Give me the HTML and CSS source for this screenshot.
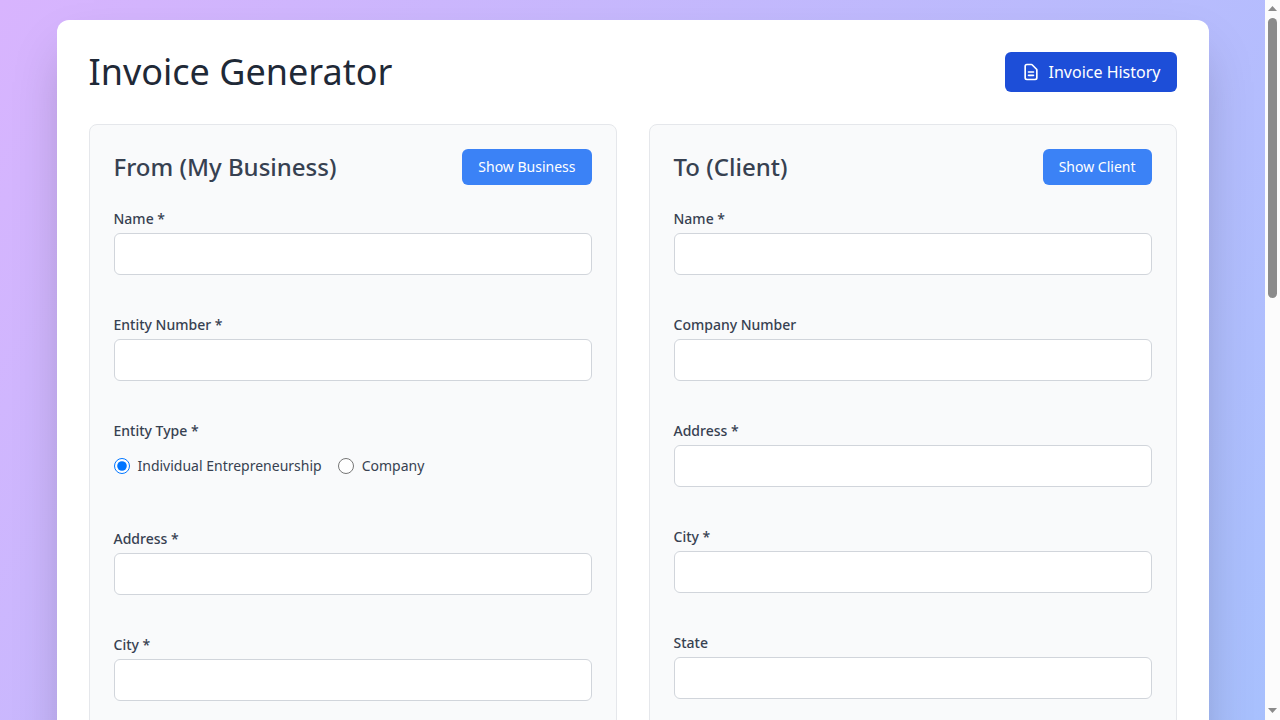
FILE: index.html
```html
<!DOCTYPE html>
<html lang="en">
<head>
<meta charset="utf-8">
<title>Invoice Generator</title>
<link rel="stylesheet" href="styles.css">
</head>
<body>
<div class="viewport">
  <div class="scroller">
    <div class="page">
      <main class="card">
        <header class="card-header">
          <h1>Invoice Generator</h1>
          <button class="history-btn" type="button">
            <svg viewBox="0 0 24 24" fill="none" stroke="currentColor" stroke-width="2" stroke-linecap="round" stroke-linejoin="round"><path d="M9 12h6m-6 4h6m2 5H7a2 2 0 01-2-2V5a2 2 0 012-2h5.586a1 1 0 01.707.293l5.414 5.414a1 1 0 01.293.707V19a2 2 0 01-2 2z"/></svg>
            <span>Invoice History</span>
          </button>
        </header>
        <div class="panels">
          <section class="panel">
            <div class="panel-header"><h2>From (My Business)</h2><button class="show-btn" type="button">Show Business</button></div>
            <div class="fields">
              <div class="field"><label for="b-name">Name *</label><input id="b-name" type="text"></div>
              <div class="field"><label for="b-number">Entity Number *</label><input id="b-number" type="text"></div>
              <div class="field field-type">
                <span class="label">Entity Type *</span>
                <div class="radios">
                  <label class="radio"><input type="radio" name="type" checked><span>Individual Entrepreneurship</span></label>
                  <label class="radio"><input type="radio" name="type"><span>Company</span></label>
                </div>
              </div>
              <div class="field"><label for="b-address">Address *</label><input id="b-address" type="text"></div>
              <div class="field"><label for="b-city">City *</label><input id="b-city" type="text"></div>
            </div>
          </section>
          <section class="panel">
            <div class="panel-header"><h2>To (Client)</h2><button class="show-btn" type="button">Show Client</button></div>
            <div class="fields">
              <div class="field"><label for="c-name">Name *</label><input id="c-name" type="text"></div>
              <div class="field"><label for="c-number">Company Number</label><input id="c-number" type="text"></div>
              <div class="field"><label for="c-address">Address *</label><input id="c-address" type="text"></div>
              <div class="field"><label for="c-city">City *</label><input id="c-city" type="text"></div>
              <div class="field"><label for="c-state">State</label><input id="c-state" type="text"></div>
            </div>
          </section>
        </div>
      </main>
    </div>
  </div>
  <div class="scrollbar">
    <svg class="arrow" viewBox="0 0 9 5"><path d="M0 5L4.5 0L9 5z"/></svg>
    <div class="thumb"></div>
    <svg class="arrow arrow-down" viewBox="0 0 9 5"><path d="M0 0H9L4.5 5z"/></svg>
  </div>
</div>
</body>
</html>
```
FILE: styles.css
```css
*, *::before, *::after { box-sizing: border-box; }

body {
  margin: 0;
  font-family: "Noto Sans", sans-serif;
  color: #374151;
  overflow: hidden;
}

h1, h2 { margin: 0; }

button {
  border: 0;
  color: #fff;
  font-family: inherit;
  border-radius: 6px;
}

.viewport {
  display: flex;
  height: 720px;
  overflow: hidden;
}

.scroller {
  flex: 1;
  overflow: hidden;
}

.page {
  height: 1780px;
  padding: 20px 0;
  display: flex;
  justify-content: center;
  background: linear-gradient(to bottom right, #d8b4fe, #93c5fd);
}

.card {
  width: 1152px;
  padding: 32px;
  background: #fff;
  border-radius: 12px;
  box-shadow: 0 25px 50px -12px rgba(0, 0, 0, 0.25);
}

.card-header {
  display: flex;
  justify-content: space-between;
  align-items: center;
  height: 40px;
  margin-bottom: 32px;
}

h1 {
  font-size: 36px;
  line-height: 40px;
  font-weight: 400;
  color: #1f2937;
}

.history-btn {
  display: flex;
  align-items: center;
  gap: 8px;
  height: 40px;
  padding: 8px 16px;
  font-size: 16px;
  line-height: 24px;
  background: #1d4ed8;
}

.history-btn svg {
  width: 20px;
  height: 20px;
}

.panels {
  display: grid;
  grid-template-columns: 1fr 1fr;
  gap: 32px;
}

.panel {
  height: 800px;
  padding: 24px;
  background: #f9fafb;
  border: 1px solid #e5e7eb;
  border-radius: 8px;
}

.panel-header {
  display: flex;
  justify-content: space-between;
  align-items: center;
  margin-bottom: 24px;
}

h2 {
  font-size: 24px;
  line-height: 32px;
  font-weight: 500;
  color: #374151;
}

.show-btn {
  padding: 8px 16px;
  font-size: 14px;
  line-height: 20px;
  background: #3b82f6;
}

.fields {
  display: flex;
  flex-direction: column;
  gap: 40px;
}

.field {
  display: flex;
  flex-direction: column;
  gap: 4px;
  font-size: 14px;
  line-height: 20px;
}

.field > label, .label { font-weight: 500; }

.field input[type="text"] {
  width: 100%;
  height: 42px;
  padding: 8px 12px;
  background: #fff;
  border: 1px solid #d1d5db;
  border-radius: 6px;
}

.field-type { height: 68px; }

.radios {
  display: flex;
  gap: 16px;
  margin-top: 11px;
}

.radio {
  display: flex;
  align-items: center;
  gap: 8px;
}

.radio input {
  width: 16px;
  height: 16px;
  margin: 0;
}

.scrollbar {
  width: 15px;
  padding: 6px 0 7px;
  display: flex;
  flex-direction: column;
  align-items: center;
  background: #fcfcfc;
}

.arrow {
  width: 9px;
  height: 5px;
  fill: #8b8b8b;
}

.thumb {
  width: 9px;
  height: 280px;
  margin-top: 7px;
  border-radius: 5px;
  background: #8b8b8b;
}

.arrow-down { margin-top: auto; }
```
